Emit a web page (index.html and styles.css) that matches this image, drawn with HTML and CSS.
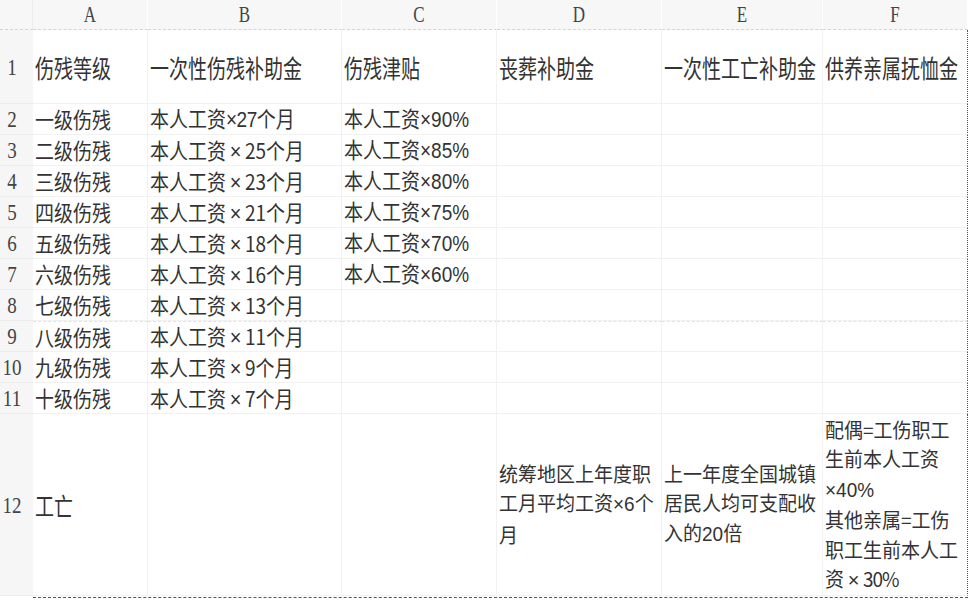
FILE: index.html
```html
<!DOCTYPE html>
<html lang="zh-CN">
<head>
<meta charset="utf-8">
<title>工伤待遇</title>
<link rel="stylesheet" href="styles.css">
</head>
<body>
<div class="sheet">
  <div class="corner"></div>
  <div class="hd"><span class="hs">A</span></div>
  <div class="hd"><span class="hs">B</span></div>
  <div class="hd"><span class="hs">C</span></div>
  <div class="hd"><span class="hs">D</span></div>
  <div class="hd"><span class="hs">E</span></div>
  <div class="hd last"><span class="hs">F</span></div>

  <div class="rn"><span class="ns">1</span></div>
  <div class="c"><span class="t tall">伤残等级</span></div>
  <div class="c"><span class="t tall">一次性伤残补助金</span></div>
  <div class="c"><span class="t tall">伤残津贴</span></div>
  <div class="c"><span class="t tall">丧葬补助金</span></div>
  <div class="c"><span class="t tall">一次性工亡补助金</span></div>
  <div class="c last"><span class="t tall">供养亲属抚恤金</span></div>

  <div class="rn"><span class="ns">2</span></div>
  <div class="c"><span class="t">一级伤残</span></div>
  <div class="c"><span class="t">本人工资<span class="l sm">×27</span>个月</span></div>
  <div class="c"><span class="t">本人工资<span class="l">×90%</span></span></div>
  <div class="c"></div>
  <div class="c"></div>
  <div class="c last"></div>

  <div class="rn"><span class="ns">3</span></div>
  <div class="c"><span class="t">二级伤残</span></div>
  <div class="c"><span class="t">本人工资<span class="mx">×</span>25个月</span></div>
  <div class="c"><span class="t">本人工资<span class="l">×85%</span></span></div>
  <div class="c"></div>
  <div class="c"></div>
  <div class="c last"></div>

  <div class="rn"><span class="ns">4</span></div>
  <div class="c"><span class="t">三级伤残</span></div>
  <div class="c"><span class="t">本人工资<span class="mx">×</span>23个月</span></div>
  <div class="c"><span class="t">本人工资<span class="l">×80%</span></span></div>
  <div class="c"></div>
  <div class="c"></div>
  <div class="c last"></div>

  <div class="rn"><span class="ns">5</span></div>
  <div class="c"><span class="t">四级伤残</span></div>
  <div class="c"><span class="t">本人工资<span class="mx">×</span>21个月</span></div>
  <div class="c"><span class="t">本人工资<span class="l">×75%</span></span></div>
  <div class="c"></div>
  <div class="c"></div>
  <div class="c last"></div>

  <div class="rn"><span class="ns">6</span></div>
  <div class="c"><span class="t">五级伤残</span></div>
  <div class="c"><span class="t">本人工资<span class="mx">×</span>18个月</span></div>
  <div class="c"><span class="t">本人工资<span class="l">×70%</span></span></div>
  <div class="c"></div>
  <div class="c"></div>
  <div class="c last"></div>

  <div class="rn"><span class="ns">7</span></div>
  <div class="c"><span class="t">六级伤残</span></div>
  <div class="c"><span class="t">本人工资<span class="mx">×</span>16个月</span></div>
  <div class="c"><span class="t">本人工资<span class="l">×60%</span></span></div>
  <div class="c"></div>
  <div class="c"></div>
  <div class="c last"></div>

  <div class="rn"><span class="ns">8</span></div>
  <div class="c"><span class="t">七级伤残</span></div>
  <div class="c"><span class="t">本人工资<span class="mx">×</span>13个月</span></div>
  <div class="c"></div>
  <div class="c"></div>
  <div class="c"></div>
  <div class="c last"></div>

  <div class="rn"><span class="ns">9</span></div>
  <div class="c dash"><span class="t">八级伤残</span></div>
  <div class="c dash"><span class="t">本人工资<span class="mx">×</span>11个月</span></div>
  <div class="c dash"></div>
  <div class="c dash"></div>
  <div class="c dash"></div>
  <div class="c dash last"></div>

  <div class="rn"><span class="ns">10</span></div>
  <div class="c"><span class="t">九级伤残</span></div>
  <div class="c"><span class="t">本人工资<span class="mx">×</span>9个月</span></div>
  <div class="c"></div>
  <div class="c"></div>
  <div class="c"></div>
  <div class="c last"></div>

  <div class="rn"><span class="ns">11</span></div>
  <div class="c"><span class="t">十级伤残</span></div>
  <div class="c"><span class="t">本人工资<span class="mx">×</span>7个月</span></div>
  <div class="c"></div>
  <div class="c"></div>
  <div class="c"></div>
  <div class="c last"></div>

  <div class="rn"><span class="ns">12</span></div>
  <div class="c"><span class="t tall">工亡</span></div>
  <div class="c"></div>
  <div class="c"></div>
  <div class="c"><span class="t ml">统筹地区上年度职<br>工月平均工资<span class="l">×6</span>个<br>月</span></div>
  <div class="c"><span class="t ml">上一年度全国城镇<br>居民人均可支配收<br>入的<span class="l">20</span>倍</span></div>
  <div class="c last"><span class="t ml">配偶=工伤职工<br>生前本人工资<br><span class="l">×40%</span><br>其他亲属=工伤<br>职工生前本人工<br>资<span class="mx">×</span><span class="cond">30%</span></span></div>
</div>
<div class="pagebreak"></div>
</body>
</html>
```

FILE: styles.css
```css
html, body {
  margin: 0;
  padding: 0;
  background: #ffffff;
}

body {
  width: 968px;
  height: 600px;
  overflow: hidden;
  font-family: "Noto Sans CJK SC", "Noto Sans", sans-serif;
  color: #333333;
}

.sheet {
  display: grid;
  grid-template-columns: 33px 115px 194px 155px 165px 161px 145px;
  grid-template-rows: 30px 74px repeat(10, 31px) 182px;
}

.corner {
  background: #f7f7f7;
  border-bottom: 1px dashed #d4d4d4;
  border-right: 1px solid #ececec;
  box-sizing: border-box;
}

.hd {
  background: #f7f7f7;
  border-bottom: 1px dashed #d4d4d4;
  border-right: 1px solid #ffffff;
  box-sizing: border-box;
  display: flex;
  align-items: center;
  justify-content: center;
  font-family: "Liberation Serif", "DejaVu Serif", serif;
  font-size: 17px;
  color: #444444;
}

.hs {
  display: inline-block;
  transform: scaleY(1.3);
}

.rn {
  background: #f6f6f6;
  border-bottom: 1px solid #ececec;
  box-sizing: border-box;
  display: flex;
  align-items: center;
  padding-left: 2px;
  font-family: "Liberation Serif", "DejaVu Serif", serif;
  font-size: 19px;
  color: #444444;
}

.ns {
  display: inline-block;
  width: 20px;
  text-align: center;
  transform: scaleY(1.25);
}

.c {
  box-sizing: border-box;
  border-right: 1px solid #f2f2f2;
  border-bottom: 1px solid #f2f2f2;
  display: flex;
  align-items: center;
  padding-left: 2px;
  white-space: nowrap;
  font-size: 19px;
  line-height: 22px;
}

.c.last {
  border-right: 1px dotted #555555;
}

.c.dash {
  border-top: 1px dashed #e2e2e2;
}

.t {
  display: inline-block;
  transform: scaleY(1.12);
}

.t.tall {
  transform: scaleY(1.3);
  position: relative;
  top: 1px;
}

.t.ml {
  transform: scaleY(1.05);
  line-height: 28.1px;
}

.l {
  font-family: "Liberation Sans", Arial, sans-serif;
}

.sm {
  letter-spacing: -0.5px;
}

.mx {
  display: inline-block;
  width: 19px;
  text-align: center;
  font-family: "Liberation Sans", Arial, sans-serif;
  font-size: 20px;
  font-weight: 300;
}

.cond {
  display: inline-block;
  letter-spacing: -1px;
}

.pagebreak {
  margin-left: 33px;
  height: 0;
  border-top: 1px dashed #555555;
  margin-top: 1px;
}
```
